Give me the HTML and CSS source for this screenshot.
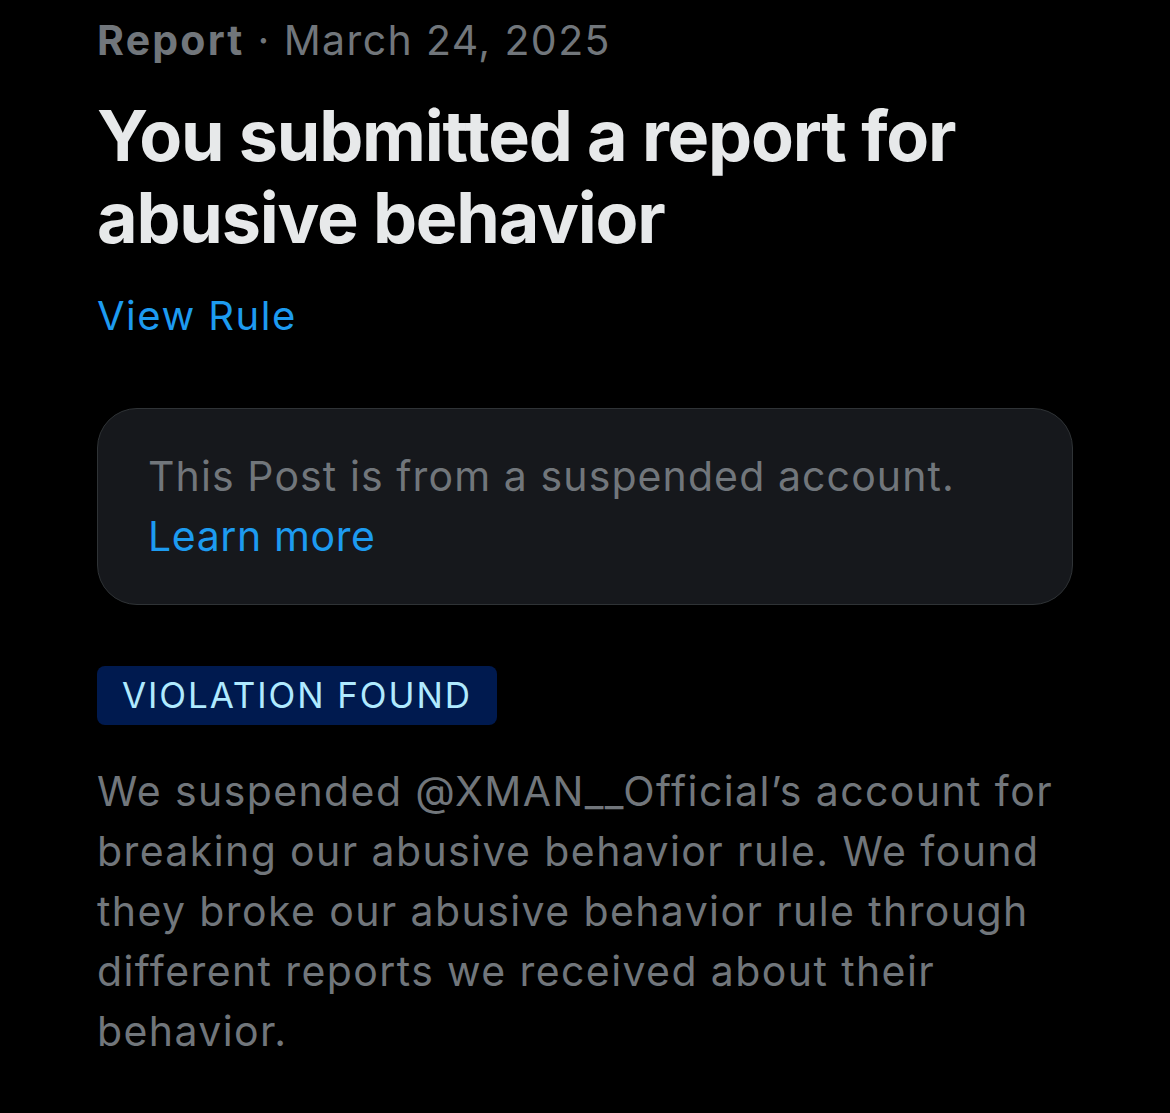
FILE: index.html
```html
<!doctype html>

<html>
<head>
	<title>Report</title>
	<meta charset="utf-8">
	<link rel="stylesheet" href="styles.css">
</head>

<body>
	<div class="report">
		<div class="meta"><b>Report</b> · March 24, 2025</div>
		<h1 class="title">You submitted a report for abusive behavior</h1>
		<a class="link rule" href="#">View Rule</a>

		<div class="notice">
			<p>This Post is from a suspended account.</p>
			<a class="link" href="#">Learn more</a>
		</div>

		<span class="badge">VIOLATION FOUND</span>

		<p class="text">We suspended @XMAN__Official’s account for breaking our abusive behavior rule. We found they broke our abusive behavior rule through different reports we received about their behavior.</p>
	</div>
</body>
</html>
```

FILE: styles.css
```css
html, body { margin: 0px; padding: 0px; background: #000 }
body {
	font-family: Inter, "Noto Sans", sans-serif;
	font-feature-settings: "liga" 0, "calt" 0;
	color: #71767b;
}
.report {
	padding: 15px 97px 40px 97px;
}
.meta {
	font-size: 41px;
	line-height: 50px;
	letter-spacing: 1.4px;
}
.meta b { font-weight: 700; letter-spacing: 2.2px }
.title {
	margin: 30px 0px 0px 0px;
	font-size: 70px;
	line-height: 82px;
	font-weight: 700;
	color: #e7e9ea;
	letter-spacing: -1.2px;
}
.link {
	display: block;
	color: #1d9bf0;
	text-decoration: none;
}
.rule {
	margin-top: 32px;
	font-size: 40px;
	line-height: 50px;
	letter-spacing: 1.5px;
}
.notice {
	margin-top: 67px;
	padding: 37px 50px 38px 50px;
	background-color: #16181c;
	border: 1px solid #2f3336;
	border-radius: 40px;
	font-size: 41px;
	line-height: 60px;
	letter-spacing: 1.1px;
}
.notice p { margin: 0px }
.notice .link { letter-spacing: 0.6px }
.badge {
	display: inline-block;
	margin-top: 61px;
	padding: 0px 25px;
	background-color: #001a4f;
	color: #b0eaff;
	border-radius: 8px;
	font-size: 35px;
	line-height: 59px;
	letter-spacing: 1.9px;
}
.text {
	margin: 36px 0px 0px 0px;
	font-size: 41px;
	line-height: 60px;
	letter-spacing: 1.4px;
}
```
